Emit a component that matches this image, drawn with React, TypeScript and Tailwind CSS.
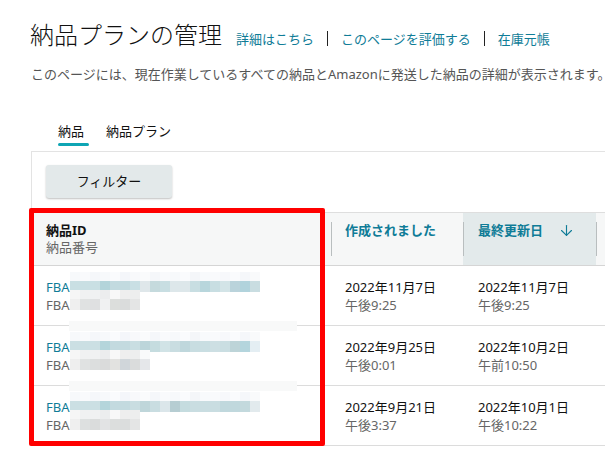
import { ArrowDown } from "lucide-react"

const font = "font-['Noto_Sans','Noto_Sans_CJK_JP',sans-serif]"

const rows = [
  {
    id: ["#c9dfe3", "#c9dfe3", "#c9dfe3", "#b3d4da", "#c2dadf", "#c2dadf", "#c9dfe4", "#dfe7ea", "#c5dadd", "#c8dee2", "#dde7ea", "#dde7ea", "#c8dee2", "#b8d6dc", "#c8dee2", "#d3e4e7", "#bad3db", "#b1d3dc", "#c9dde1"],
    num: ["#efefef", "#e0e2e2", "#dfe0e1", "#f0f1f2", "#dcdedc", "#dadcdc", "#e4e5e5"],
    created: ["2022年11月7日", "午後9:25"],
    updated: ["2022年11月7日", "午後9:25"],
  },
  {
    id: ["#cbdfe3", "#cbdfe3", "#cbdfe3", "#b4d5db", "#c3dadf", "#c3dadf", "#c9dee2", "#bcd5da", "#c5dcdf", "#d1e3e6", "#c9dde1", "#bfd7dc", "#c8dde1", "#c9dee2", "#cddfe3", "#cadee2", "#bdd4d8", "#b4d5dd", "#e4eef3"],
    num: ["#eeeeee", "#e0e2e2", "#dcdede", "#dadbdb", "#e2e2e0", "#d0d6da", "#dadcdc", "#e5e7ea"],
    created: ["2022年9月25日", "午後0:01"],
    updated: ["2022年10月2日", "午前10:50"],
  },
  {
    id: ["#cbdfe3", "#cbdfe3", "#cbdfe3", "#b4d5db", "#c3dadf", "#c3dadf", "#c9dde1", "#bfd6da", "#c9dde1", "#dbe6ea", "#b6cdd2", "#c5dcdf", "#c9dde1", "#c9dde1", "#c9dde1", "#c0d8dd", "#c0d8dd", "#c3d9dd", "#e2eaed"],
    num: ["#efefef", "#dde0e0", "#dadcdc", "#e2e3e4", "#dcdedd", "#dbdddd", "#e4e5e5"],
    created: ["2022年9月21日", "午後3:37"],
    updated: ["2022年10月1日", "午後10:22"],
  },
]

const faintTop = ["#f7f9fb", "#f9fafc", "#f5f7fa", "#f7f9fb", "#fafbfd", "#f4f6fa", "#f8f9fb", "#fafbfc", "#f5f7fa", "#f9fafc", "#f7f9fb", "#fafbfd", "#f4f6f9", "#f8fafc", "#f9fafc", "#f7f8fb", "#fafbfd", "#f5f7fa", "#f9fafb"]
const faintMid = ["#f6f6f6", "#f0f1f2", "#f0f1f2", "#ecedee", "#f8f8f8", "#eeeeee", "#edeeee", "#f9fafb", "#fbfbfc"]

// blurred (pixelated) part of the shipment number
function Pixels({ colors, faint }: { colors: string[]; faint: string[] }) {
  return (
    <span className="relative inline-block h-[18px]" style={{ width: colors.length * 10 }}>
      <span className="absolute left-0 top-[-6px] flex h-[9px]">
        {faint.slice(0, Math.max(colors.length, 7)).map((c, i) => (
          <span key={i} className="h-full w-[10px]" style={{ backgroundColor: c }} />
        ))}
      </span>
      <span className="absolute left-0 top-[3px] flex h-[11px]">
        {colors.map((c, i) => (
          <span key={i} className="h-full w-[10px]" style={{ backgroundColor: c }} />
        ))}
      </span>
    </span>
  )
}

function Divider() {
  return <div className="h-[34px] w-px shrink-0 self-center bg-[#b9bebf]" />
}

export default function App() {
  return (
    <div className={`relative h-[455px] w-[605px] overflow-hidden bg-white text-[#111] ${font}`}>
      <div className="pl-[31px] pt-[19px]">
        <div className="flex items-baseline whitespace-nowrap">
          <h1 className="ml-[-1px] text-[24px] leading-[32px] font-light text-[#111]">納品プランの管理</h1>
          <a className="ml-[14px] text-[13px] text-[#0f7c97]">詳細はこちら</a>
          <span className="mx-[13px] inline-block h-[15px] w-px translate-y-[2px] bg-[#222]" />
          <a className="text-[13px] text-[#0f7c97]">このページを評価する</a>
          <span className="mx-[13px] inline-block h-[15px] w-px translate-y-[2px] bg-[#222]" />
          <a className="text-[13px] text-[#0f7c97]">在庫元帳</a>
        </div>
        <p className="mt-[13px] whitespace-nowrap text-[13px] leading-[20px] text-[#555]">
          このページには、現在作業しているすべての納品とAmazonに発送した納品の詳細が表示されます。
        </p>

        <div className="ml-[27px] mt-[37px] flex text-[13px] leading-[20px]">
          <div className="flex w-[31px] flex-col">
            <span>納品</span>
            <span className="mt-[2px] h-[3px] w-[31px] rounded-sm bg-[#0ea5b4]" />
          </div>
          <span className="ml-[17px]">納品プラン</span>
        </div>

        <div className="mt-[5px] border-l border-t border-[#e3e3e3]">
          <div className="pl-[14px] pt-[13px]">
            <button className="h-[33px] w-[126px] rounded-[3px] bg-[#e3e9ea] text-[13px] text-[#111] shadow-[0_1px_2px_rgba(0,0,0,0.25)]">
              フィルター
            </button>
          </div>

          <div className="mt-[14px] w-[800px] border-t border-[#dedede]">
            {/* header */}
            <div className="grid h-[53px] grid-cols-[299px_132px_133px_236px] border-b border-[#d5d5d5] bg-[#f6f7f7] text-[13px] leading-[17px]">
              <div className="pl-[14px] pt-[9px]">
                <div className="font-bold text-[#111]">納品ID</div>
                <div className="text-[#666]">納品番号</div>
              </div>
              <div className="flex">
                <Divider />
                <div className="pl-[13px] pt-[9px] font-bold text-[#0f7c97]">作成されました</div>
              </div>
              <div className="flex bg-[#e3eaeb]">
                <Divider />
                <div className="flex flex-1 items-start justify-between pl-[14px] pr-[21px] pt-[9px] font-bold text-[#0f7c97]">
                  <span>最終更新日</span>
                  <ArrowDown size={17} strokeWidth={1.6} className="mt-[0px]" />
                </div>
              </div>
              <div className="flex">
                <Divider />
              </div>
            </div>

            {rows.map((r, i) => (
              <div
                key={i}
                className="relative grid h-[60px] grid-cols-[299px_132px_133px_236px] border-b border-[#dcdcdc] text-[13px] leading-[18px]"
              >
                <div className="pl-[14px] pt-[12px]">
                  <div className="flex items-center text-[#0f7c97]">
                    <span>FBA</span>
                    <Pixels colors={r.id} faint={faintTop} />
                  </div>
                  <div className="flex items-center text-[#666]">
                    <span>FBA</span>
                    <Pixels colors={r.num} faint={faintMid} />
                  </div>
                </div>
                <div className="pl-[14px] pt-[12px]">
                  <div>{r.created[0]}</div>
                  <div className="text-[#666]">{r.created[1]}</div>
                </div>
                <div className="pl-[15px] pt-[12px]">
                  <div>{r.updated[0]}</div>
                  <div className="text-[#666]">{r.updated[1]}</div>
                </div>
                <div />
                {i < rows.length - 1 && (
                  <div className="absolute bottom-[-6px] left-[37px] z-10 h-[10px] w-[228px] bg-[#f8f9f9]" />
                )}
              </div>
            ))}
          </div>
        </div>
      </div>

      {/* red annotation box */}
      <div className="absolute left-[29px] top-[208px] h-[238px] w-[296px] rounded-[2px] border-[5px] border-[#ff0000]" />
    </div>
  )
}
